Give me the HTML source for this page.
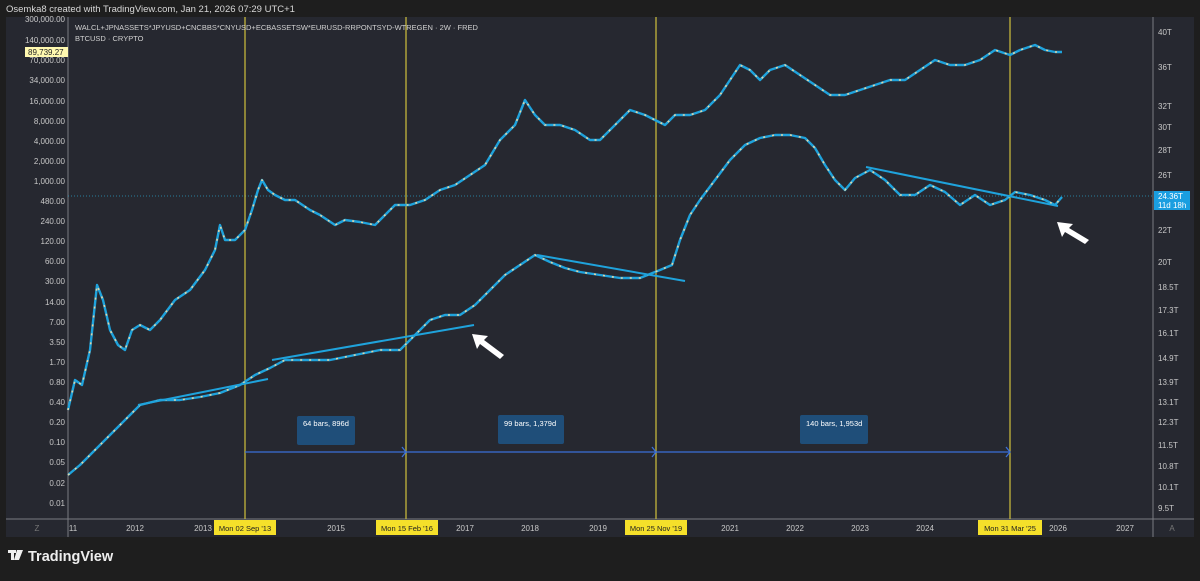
<!DOCTYPE html><html><head><style>
body{margin:0;background:#1e1e1e;width:1200px;height:576px;overflow:hidden;font-family:"Liberation Sans",sans-serif}
</style></head><body>
<svg width="1200" height="576" xmlns="http://www.w3.org/2000/svg" font-family="Liberation Sans, sans-serif">
<defs>
<polyline id="a" points="68,410 75,380 82,385 90,350 97,285 103,300 110,330 118,345 125,350 132,330 140,325 150,330 160,320 175,300 190,290 205,270 215,250 220,225 225,240 235,240 245,230 252,210 258,190 262,180 268,190 275,195 285,200 295,200 310,210 320,215 335,225 345,220 360,222 375,225 385,215 395,205 410,205 425,200 440,190 455,185 470,175 485,165 500,140 515,125 525,100 535,115 545,125 560,125 575,130 590,140 600,140 615,125 630,110 645,115 655,120 665,125 675,115 690,115 705,110 720,95 730,80 740,65 750,70 760,80 770,70 785,65 800,75 815,85 830,95 845,95 860,90 875,85 890,80 905,80 920,70 935,60 950,65 965,65 980,60 995,50 1010,55 1020,50 1035,45 1045,50 1055,52 1062,52"/>
<polyline id="b" points="68,475 80,465 95,450 110,435 125,420 140,405 160,400 180,400 200,397 220,393 240,385 255,375 270,368 285,360 305,360 330,360 355,355 380,350 400,350 415,335 430,320 445,315 460,315 475,305 490,290 505,275 520,265 535,255 550,262 565,268 580,272 600,275 620,278 640,278 660,270 672,265 680,240 690,215 700,200 715,180 730,160 745,145 760,138 775,135 790,135 805,138 815,148 825,165 835,180 845,190 855,178 870,170 885,180 900,195 915,195 930,185 945,192 960,205 975,195 990,205 1005,200 1015,192 1030,195 1045,200 1055,205 1062,197"/>
</defs>
<rect width="1200" height="576" fill="#1e1e1e"/>
<text x="6" y="12" fill="#d8d8d8" font-size="9.5">Osemka8 created with TradingView.com, Jan 21, 2026 07:29 UTC+1</text>
<rect x="6" y="17" width="1188" height="520" fill="#262830"/>
<line x1="68" y1="17" x2="68" y2="537" stroke="#7a7c82"/>
<line x1="1153" y1="17" x2="1153" y2="537" stroke="#7a7c82"/>
<line x1="6" y1="519" x2="1194" y2="519" stroke="#7a7c82"/>
<line x1="68" y1="196" x2="1153" y2="196" stroke="#2a9bc0" stroke-dasharray="1,2" stroke-width="0.8"/>
<g stroke="#cfc03c" stroke-width="1.2"><line x1="245" y1="17" x2="245" y2="519"/><line x1="406" y1="17" x2="406" y2="519"/><line x1="656" y1="17" x2="656" y2="519"/><line x1="1010" y1="17" x2="1010" y2="519"/></g>
<text x="75" y="30" fill="#d0d0d0" font-size="7.5">WALCL+JPNASSETS*JPYUSD+CNCBBS*CNYUSD+ECBASSETSW*EURUSD-RRPONTSYD-WTREGEN · 2W · FRED</text>
<text x="75" y="41" fill="#d0d0d0" font-size="7.5">BTCUSD · CRYPTO</text>
<g fill="none" stroke-linejoin="round">
<use href="#a" stroke="#1fa3dc" stroke-width="2.4"/>
<use href="#b" stroke="#1fa3dc" stroke-width="2.4"/>
<use href="#a" stroke="#e0d6a8" stroke-width="1.6" stroke-dasharray="2,7"/>
<use href="#b" stroke="#e0d6a8" stroke-width="1.6" stroke-dasharray="2,7"/>
</g>
<g stroke="#1fa3dc" stroke-width="2"><line x1="138" y1="405" x2="268" y2="379"/><line x1="272" y1="360" x2="474" y2="325"/><line x1="537" y1="255" x2="685" y2="281"/><line x1="866" y1="167" x2="1058" y2="206"/></g>
<g fill="#fff"><polygon points="472,334 488,336 484,340 504,355 500,359 480,344 477,349"/><polygon points="1057,222 1073,224 1069,228 1089,240 1085,244 1065,232 1062,237"/></g>
<g stroke="#3b6fd8" stroke-width="1.3" fill="none"><line x1="245" y1="452" x2="1010" y2="452"/><polyline points="402,447 406,452 402,457"/><polyline points="652,447 656,452 652,457"/><polyline points="1006,447 1010,452 1006,457"/></g>
<g fill="#1f4e79"><rect x="297" y="416" width="58" height="29" rx="2"/><rect x="498" y="415" width="66" height="29" rx="2"/><rect x="800" y="415" width="68" height="29" rx="2"/></g>
<g fill="#fff" font-size="7.5"><text x="303" y="426">64 bars, 896d</text><text x="504" y="426">99 bars, 1,379d</text><text x="806" y="426">140 bars, 1,953d</text></g>
<g fill="#c8c8c8" font-size="8" text-anchor="end">
<text x="65" y="22">300,000.00</text><text x="65" y="43">140,000.00</text><text x="65" y="63">70,000.00</text><text x="65" y="83">34,000.00</text><text x="65" y="104">16,000.00</text><text x="65" y="124">8,000.00</text><text x="65" y="144">4,000.00</text><text x="65" y="164">2,000.00</text><text x="65" y="184">1,000.00</text><text x="65" y="204">480.00</text><text x="65" y="224">240.00</text><text x="65" y="244">120.00</text><text x="65" y="264">60.00</text><text x="65" y="284">30.00</text><text x="65" y="305">14.00</text><text x="65" y="325">7.00</text><text x="65" y="345">3.50</text><text x="65" y="365">1.70</text><text x="65" y="385">0.80</text><text x="65" y="405">0.40</text><text x="65" y="425">0.20</text><text x="65" y="445">0.10</text><text x="65" y="465">0.05</text><text x="65" y="486">0.02</text><text x="65" y="506">0.01</text>
</g>
<rect x="25" y="47" width="43" height="10" fill="#fff9b0"/><text x="28" y="55" fill="#222" font-size="8">89,739.27</text>
<g fill="#c8c8c8" font-size="8">
<text x="1158" y="35">40T</text><text x="1158" y="70">36T</text><text x="1158" y="109">32T</text><text x="1158" y="130">30T</text><text x="1158" y="153">28T</text><text x="1158" y="178">26T</text><text x="1158" y="233">22T</text><text x="1158" y="265">20T</text><text x="1158" y="290">18.5T</text><text x="1158" y="313">17.3T</text><text x="1158" y="336">16.1T</text><text x="1158" y="361">14.9T</text><text x="1158" y="385">13.9T</text><text x="1158" y="405">13.1T</text><text x="1158" y="425">12.3T</text><text x="1158" y="448">11.5T</text><text x="1158" y="469">10.8T</text><text x="1158" y="490">10.1T</text><text x="1158" y="511">9.5T</text>
</g>
<rect x="1154" y="191" width="36" height="19" fill="#1a9ee0"/><text x="1158" y="199" fill="#fff" font-size="8">24.36T</text><text x="1158" y="208" fill="#fff" font-size="8">11d 18h</text>
<g fill="#c8c8c8" font-size="8" text-anchor="middle">
<text x="37" y="531" fill="#777">Z</text><text x="73" y="531">11</text><text x="135" y="531">2012</text><text x="203" y="531">2013</text><text x="336" y="531">2015</text><text x="465" y="531">2017</text><text x="530" y="531">2018</text><text x="598" y="531">2019</text><text x="730" y="531">2021</text><text x="795" y="531">2022</text><text x="860" y="531">2023</text><text x="925" y="531">2024</text><text x="1058" y="531">2026</text><text x="1125" y="531">2027</text><text x="1172" y="531" fill="#777">A</text>
</g>
<g fill="#f5e02a"><rect x="214" y="520" width="62" height="15"/><rect x="376" y="520" width="62" height="15"/><rect x="625" y="520" width="62" height="15"/><rect x="978" y="520" width="64" height="15"/></g>
<g fill="#222" font-size="7.5" text-anchor="middle"><text x="245" y="531">Mon 02 Sep '13</text><text x="407" y="531">Mon 15 Feb '16</text><text x="656" y="531">Mon 25 Nov '19</text><text x="1010" y="531">Mon 31 Mar '25</text></g>
<g fill="#eee"><rect x="8" y="550" width="8" height="3"/><rect x="11" y="550" width="3" height="10"/><polygon points="17,550 23,550 19,560 14,560"/></g>
<text x="28" y="561" fill="#eee" font-size="14.5" font-weight="bold">TradingView</text>
</svg>
</body></html>
